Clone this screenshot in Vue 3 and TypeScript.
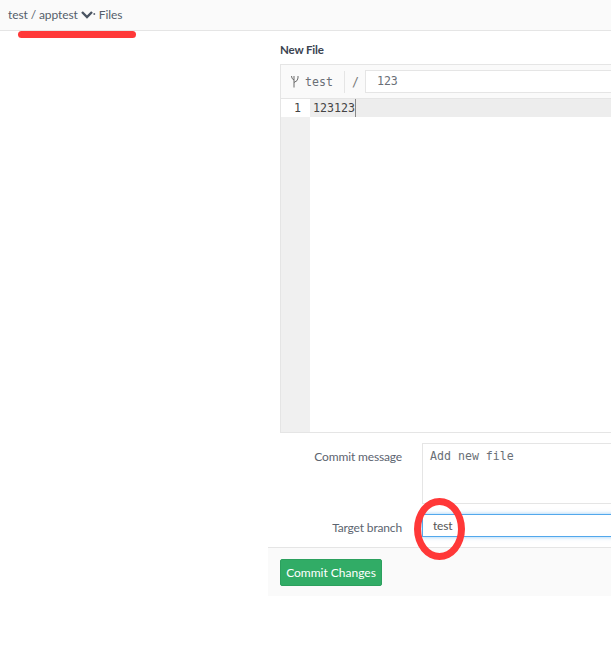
<script setup lang="ts">
const lineNumbers: number[] = [1]
</script>

<template>
  <div class="page">
    <header class="topbar">
      <span class="crumb">test / apptest</span>
      <svg class="chev" width="15" height="10" viewBox="0 0 15 10"><path d="M1 2 L6 7 L11 2" fill="none" stroke="#4a5462" stroke-width="2.4" /><rect x="12.5" y="3" width="1.6" height="2" fill="#6a7280" /></svg>
      <span class="crumb">Files</span>
    </header>
    <main class="main">
      <section class="form">
        <h1 class="title">New File</h1>
        <div class="editor">
          <div class="file-bar">
            <span class="branch">
              <svg width="8" height="13" viewBox="0 0 8 13"><path d="M3 1 V12.5 M0.5 1 Q0.5 4 3 5 M7 1 V3 Q7 6 3 7.5" fill="none" stroke="#6a6a6a" stroke-width="1" /></svg>
              test
            </span>
            <span class="sep"></span>
            <span class="slash">/</span>
            <span class="name-input">123</span>
          </div>
          <div class="code">
            <div class="gutter">
              <div v-for="n in lineNumbers" :key="n" class="num">{{ n }}</div>
            </div>
            <div class="lines">
              <div class="active-line"><span class="cursor">123123</span></div>
            </div>
          </div>
        </div>
        <div class="row row-message">
          <label class="label">Commit message</label>
          <div class="textarea">Add new file</div>
        </div>
        <div class="row row-branch">
          <label class="label">Target branch</label>
          <div class="branch-input">test</div>
        </div>
      </section>
      <div class="actions">
        <button class="commit" type="button">Commit Changes</button>
      </div>
    </main>
    <div class="scribble"></div>
    <div class="circle"></div>
  </div>
</template>

<style>
html, body { margin: 0; background: #fff; overflow: hidden; }
</style>

<style scoped>
.page {
  position: relative;
  width: 611px;
  height: 666px;
  overflow: hidden;
  background: #fff;
  font-family: Lato, "Open Sans", sans-serif;
  font-size: 12px;
  letter-spacing: -0.15px;
  color: #5c5c5c;
}
.topbar {
  display: flex;
  align-items: center;
  gap: 3px;
  height: 29px;
  padding-left: 8px;
  padding-bottom: 1px;
  background: #fafafa;
  border-bottom: 1px solid #e5e5e5;
}
.crumb { color: #555e6b; letter-spacing: -0.1px; }
.main {
  width: 400px;
  margin-left: 268px;
}
.form { padding: 12px 0 0 12px; }
.title {
  margin: 0 0 7px;
  height: 14px;
  line-height: 14px;
  font-size: 11.5px;
  font-weight: 700;
  color: #3a4350;
}
.editor {
  width: 400px;
  height: 367px;
  border: 1px solid #e5e5e5;
  display: flex;
  flex-direction: column;
}
.file-bar {
  display: flex;
  align-items: center;
  height: 33px;
  padding-left: 10px;
  background: #fafafa;
  border-bottom: 1px solid #e5e5e5;
  font-family: "DejaVu Sans Mono", monospace;
  font-size: 11.6px;
  letter-spacing: 0;
}
.branch { display: flex; align-items: center; gap: 6px; color: #6a6f76; }
.sep { width: 1px; height: 22px; margin-left: 11px; background: #e5e5e5; }
.slash { margin-left: 7px; color: #777; }
.name-input {
  margin-left: 6px;
  width: 300px;
  height: 21px;
  line-height: 21px;
  padding-left: 11px;
  background: #fff;
  border: 1px solid #e5e5e5;
  color: #6a6f76;
}
.code {
  flex: 1;
  display: flex;
  font-family: "DejaVu Sans Mono", monospace;
  font-size: 11.6px;
  letter-spacing: 0;
}
.gutter { width: 29px; background: #f0f0f0; }
.num {
  height: 18px;
  line-height: 19px;
  padding-right: 9px;
  text-align: right;
  color: #444;
  background: #fff;
}
.lines { flex: 1; }
.active-line {
  height: 18px;
  line-height: 19px;
  padding-left: 3px;
  background: #ededed;
  color: #444;
}
.cursor { border-right: 1px solid #888; display: inline-block; height: 18px; }
.row { display: flex; }
.label {
  width: 122px;
  text-align: right;
  color: #5c6470;
  flex: none;
}
.row-message { margin-top: 10px; }
.row-message .label { padding-top: 6px; line-height: 16px; }
.textarea {
  box-sizing: border-box;
  margin-left: 20px;
  width: 300px;
  height: 61px;
  padding: 4px 7px;
  border: 1px solid #e5e5e5;
  font-family: "DejaVu Sans Mono", monospace;
  font-size: 11.6px;
  letter-spacing: 0;
  line-height: 16px;
  color: #6a6f76;
}
.row-branch { margin-top: 10px; align-items: center; }
.row-branch .label { padding-top: 4px; }
.branch-input {
  box-sizing: border-box;
  margin-left: 20px;
  width: 300px;
  height: 23px;
  line-height: 21px;
  padding-left: 10px;
  border: 1px solid #52a8ec;
  box-shadow: 0 0 4px rgba(82, 168, 236, 0.6);
  color: #555;
}
.actions {
  margin-top: 10px;
  height: 49px;
  padding: 11px 12px 0;
  box-sizing: border-box;
  background: #fafafa;
  border-top: 1px solid #e5e5e5;
}
.commit {
  display: block;
  width: 102px;
  height: 27px;
  padding: 0;
  background: #31ac66;
  border: 1px solid #2ca05e;
  border-radius: 2px;
  color: #fff;
  font-family: inherit;
  font-size: 12px;
  letter-spacing: 0;
}
.scribble {
  position: absolute;
  left: 18px;
  top: 31px;
  width: 118px;
  height: 7px;
  background: #ff3838;
  border-radius: 4px;
}
.circle {
  position: absolute;
  left: 414px;
  top: 498px;
  width: 37px;
  height: 48px;
  border: 7px solid #ff3838;
  border-radius: 50%;
}
</style>
